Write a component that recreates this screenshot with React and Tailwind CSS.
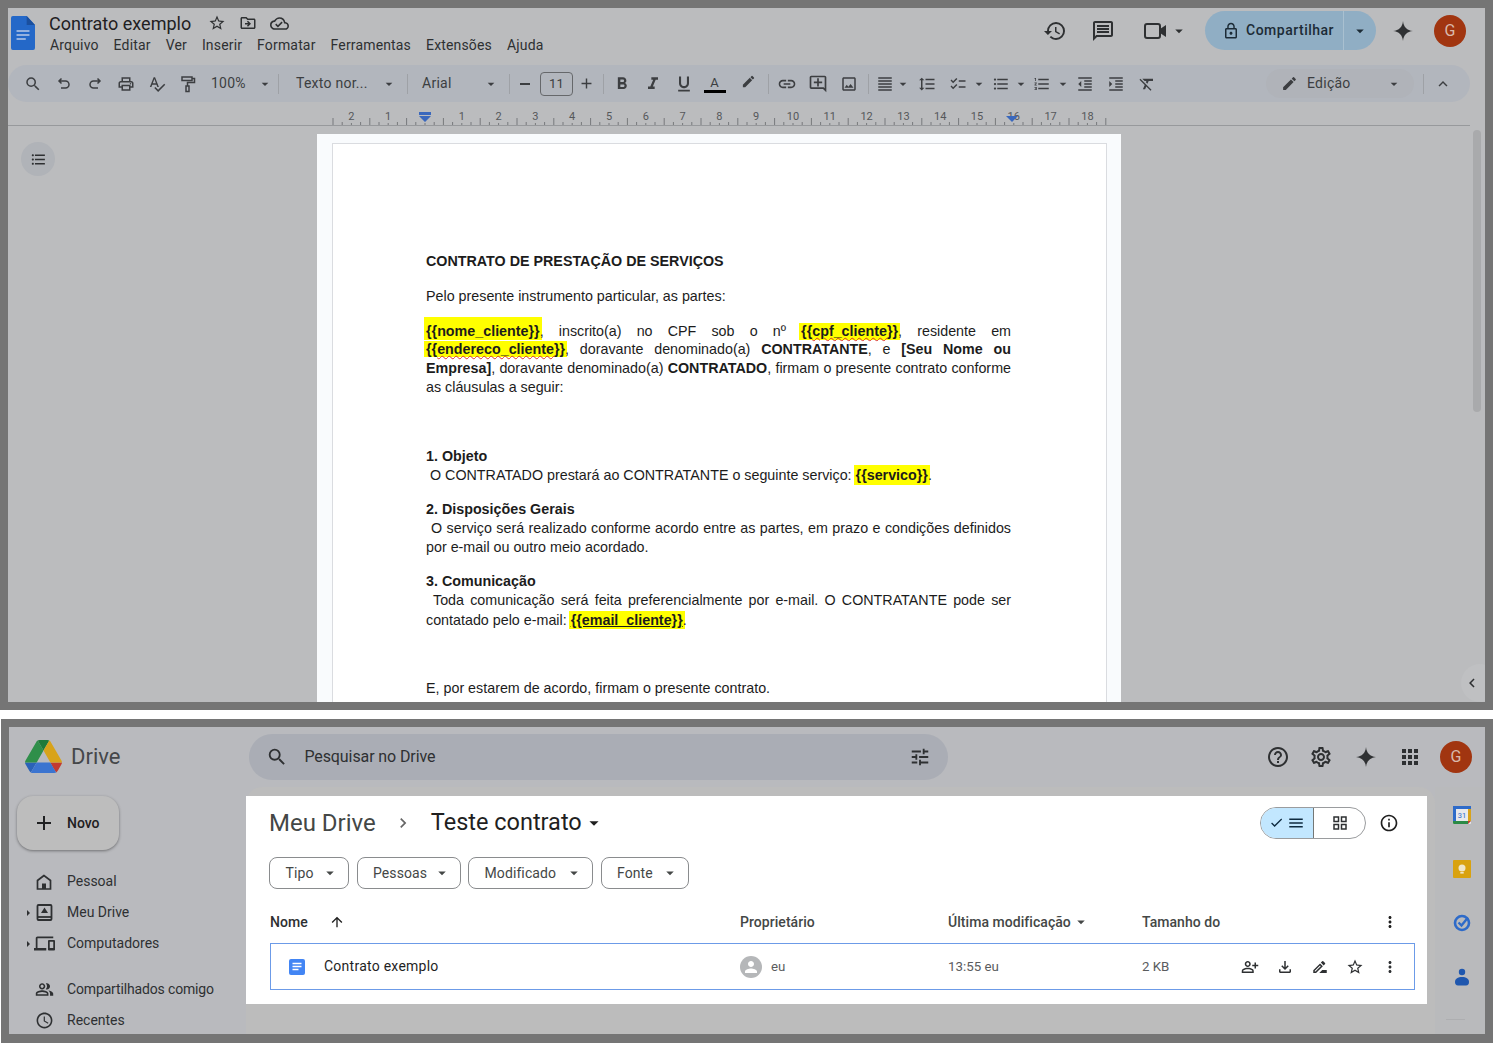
import React from "react";
import {
  MdAccessTime, MdAdd, MdApps, MdArrowDropDown, MdArrowUpward, MdCheck, MdChevronLeft, MdChevronRight,
  MdEdit, MdFormatAlignJustify, MdFormatBold, MdFormatClear, MdFormatIndentDecrease, MdFormatIndentIncrease,
  MdFormatItalic, MdFormatLineSpacing, MdFormatListBulleted, MdFormatListNumbered, MdFormatUnderlined,
  MdHelpOutline, MdHistory, MdInfoOutline, MdKeyboardArrowUp, MdLink, MdLockOutline, MdMenu, MdMoreVert,
  MdOutlineAddComment, MdOutlineChecklist, MdOutlineCloudDone, MdOutlineDevices, MdOutlineDriveFileMove,
  MdOutlineDriveFileRenameOutline, MdOutlineFileDownload, MdOutlineGridView,
  MdOutlineImage, MdOutlineMessage, MdOutlinePeopleAlt, MdOutlinePersonAddAlt, MdOutlinePrint, MdOutlineSettings,
  MdOutlineSpellcheck, MdSearch, MdStarBorder, MdTune, MdPerson,
} from "react-icons/md";

function Spark({ size = 24 }) {
  return (
    <svg width={size} height={size} viewBox="0 0 24 24" fill="#2f3133">
      <path d="M12 2C12.6 8 16 11.4 22 12C16 12.6 12.6 16 12 22C11.4 16 8 12.6 2 12C8 11.4 11.4 8 12 2Z" />
    </svg>
  );
}

function Cell({ children }) {
  return <div className="flex w-[31px] shrink-0 items-center justify-center">{children}</div>;
}

function Sep({ className }) {
  return <div className={"h-[20px] w-px shrink-0 bg-[#9ea1a6] " + className} />;
}

function Undo({ flip }) {
  return (
    <svg width="18" height="18" viewBox="0 0 18 18" fill="none" stroke="#3c3e41" strokeWidth="1.5" className={flip ? "-scale-x-100" : ""}>
      <path d="M6.500 3.500L4 6l2.500 2.500M4 6h6.500a3.500 3.500 0 0 1 0 7H6" />
    </svg>
  );
}

function Roller() {
  return (
    <svg width="18" height="18" viewBox="0 0 18 18" fill="none" stroke="#3c3e41" strokeWidth="1.5">
      <path d="M3 2h10v3.500H3zM13 3.500h2.500v4H8.500V11M7 11h3v5.500H7z" />
    </svg>
  );
}

function Ruler() {
  const ticks = [];
  for (let i = -10; i <= 74; i++) {
    const x = 417 + i * 9.2;
    const h = i % 4 === 0 ? 2 : Math.abs(i % 4) === 2 ? 7 : 3;
    ticks.push(<line key={i} x1={x} x2={x} y1={23 - h} y2={23} stroke="#77797c" strokeWidth="1" />);
  }
  const nums = [-2, -1, 1, 2, 3, 4, 5, 6, 7, 8, 9, 10, 11, 12, 13, 14, 15, 16, 17, 18];
  return (
    <svg width="1462" height="24" className="block">
      <line x1="0" x2="1462" y1="23.5" y2="23.5" stroke="#97999c" />
      {ticks}
      {nums.map((n) => (
        <text key={n} x={417 + n * 36.8} y="18" textAnchor="middle" fontSize="11" fill="#55575a" fontFamily="Roboto, sans-serif">
          {Math.abs(n)}
        </text>
      ))}
      <path d="M411 10h12v3h-12z M411 14h12l-6 6z" fill="#3a68bd" />
      <path d="M998 14h12l-6 6z" fill="#3a68bd" />
    </svg>
  );
}

function Mark({ children, pad }) {
  return <span className={"mx-[-2px] bg-[#ffff00] px-[2px] font-bold " + pad}>{children}</span>;
}

function DocsWindow() {
  return (
    <div className="relative h-[710px] w-[1493px] overflow-hidden border-8 border-[#757575] bg-[#bbbcbe] font-['Roboto',sans-serif] text-[#2e3032]">
      <header className="flex h-[57px] items-start">
        <svg width="24" height="34" viewBox="0 0 26 34" preserveAspectRatio="none" className="ml-[3px] mt-[8px] shrink-0">
          <path d="M2 0h15l9 9v23a2 2 0 0 1-2 2H2a2 2 0 0 1-2-2V2a2 2 0 0 1 2-2z" fill="#2468c8" />
          <path d="M17 0l9 9h-9z" fill="#1a4f9e" />
          <path d="M6 15h14M6 19h14M6 23h10" stroke="#b9c9e6" strokeWidth="1.6" />
        </svg>
        <div className="ml-[14px] shrink-0 pt-[3px]">
          <div className="flex h-[24px] items-center">
            <span className="text-[18px] text-[#1f2022]">Contrato exemplo</span>
            <MdStarBorder size={18} className="ml-[17px]" />
            <MdOutlineDriveFileMove size={18} className="ml-[13px]" />
            <MdOutlineCloudDone size={19} className="ml-[13px]" />
          </div>
          <nav className="ml-px mt-px flex gap-[15px] text-[14px] leading-[18px] tracking-[0.16px]">
            <span>Arquivo</span>
            <span>Editar</span>
            <span>Ver</span>
            <span>Inserir</span>
            <span>Formatar</span>
            <span>Ferramentas</span>
            <span>Extensões</span>
            <span>Ajuda</span>
          </nav>
        </div>
        <div className="ml-auto mr-[19px] mt-[3px] flex h-[39px] items-center self-start">
          <MdHistory size={24} />
          <MdOutlineMessage size={24} className="ml-[24px]" />
          <svg width="27" height="27" viewBox="0 0 27 27" fill="none" className="ml-[27px]">
            <rect x="3" y="7" width="15" height="14" rx="2" stroke="#2e3032" strokeWidth="2" />
            <path d="M18 12l6-4v12l-6-4z" fill="#2e3032" />
          </svg>
          <MdArrowDropDown size={18} className="ml-[1px]" />
          <div className="ml-[17px] flex h-[39px] w-[171px] items-center rounded-full bg-[#90aec4] text-[14px] font-medium tracking-[0.5px] text-[#1c2b36]">
            <MdLockOutline size={18} className="ml-[17px]" />
            <span className="ml-[6px]">Compartilhar</span>
            <div className="ml-auto flex h-full w-[33px] items-center justify-center border-l border-[#a9c0d0]">
              <MdArrowDropDown size={18} />
            </div>
          </div>
          <div className="ml-[15px]"><Spark size={24} /></div>
          <div className="ml-[19px] flex h-[32px] w-[32px] items-center justify-center rounded-full bg-[#a13510] text-[16px] text-[#d9b9ac]">G</div>
        </div>
      </header>

      <div className="flex h-[37px] w-[1462px] items-center rounded-full bg-[#b2b6bd] pl-[9px] text-[14px] tracking-[0.25px] text-[#3c3e41]">
        <Cell><MdSearch size={18} /></Cell>
        <Cell><Undo /></Cell>
        <Cell><Undo flip /></Cell>
        <Cell><MdOutlinePrint size={18} /></Cell>
        <Cell><MdOutlineSpellcheck size={18} /></Cell>
        <Cell><Roller /></Cell>
        <span className="ml-[8px] w-[36px] shrink-0">100%</span>
        <MdArrowDropDown size={16} className="ml-[10px] shrink-0" />
        <Sep className="ml-[5px]" />
        <span className="ml-[17px] w-[71px] shrink-0 whitespace-nowrap">Texto nor...</span>
        <MdArrowDropDown size={16} className="ml-[14px] shrink-0" />
        <Sep className="ml-[10px]" />
        <span className="ml-[14px] w-[29px] shrink-0">Arial</span>
        <MdArrowDropDown size={16} className="ml-[32px] shrink-0" />
        <Sep className="ml-[10px]" />
        <span className="ml-[10px] h-[2px] w-[10px] shrink-0 bg-[#3c3e41]" />
        <div className="ml-[10px] flex h-[24px] w-[33px] shrink-0 items-center justify-center rounded-[4px] border border-[#66686b] text-[13px]">11</div>
        <MdAdd size={17} className="ml-[5px] shrink-0" />
        <Sep className="ml-[8px]" />
        <div className="ml-[2px] flex">
          <Cell><MdFormatBold size={20} /></Cell>
          <Cell><MdFormatItalic size={20} /></Cell>
          <Cell><MdFormatUnderlined size={20} /></Cell>
          <Cell>
            <div className="flex flex-col items-center">
              <span className="text-[13px] leading-[15px]">A</span>
              <span className="h-[3px] w-[22px] bg-black" />
            </div>
          </Cell>
          <div className="ml-[3px]"><Cell><MdEdit size={15} /></Cell></div>
        </div>
        <Sep className="ml-[4px]" />
        <div className="ml-[2px] flex">
          <Cell><MdLink size={20} /></Cell>
          <Cell><MdOutlineAddComment size={20} /></Cell>
          <Cell><MdOutlineImage size={18} /></Cell>
        </div>
        <Sep className="ml-[4px]" />
        <MdFormatAlignJustify size={18} className="ml-[7px] shrink-0" />
        <MdArrowDropDown size={16} className="ml-[1px] shrink-0" />
        <MdFormatLineSpacing size={18} className="ml-[7px] shrink-0" />
        <MdOutlineChecklist size={18} className="ml-[13px] shrink-0" />
        <MdArrowDropDown size={16} className="ml-[4px] shrink-0" />
        <MdFormatListBulleted size={18} className="ml-[5px] shrink-0" />
        <MdArrowDropDown size={16} className="ml-[3px] shrink-0" />
        <MdFormatListNumbered size={18} className="ml-[4px] shrink-0" />
        <MdArrowDropDown size={16} className="ml-[4px] shrink-0" />
        <MdFormatIndentDecrease size={18} className="ml-[5px] shrink-0" />
        <MdFormatIndentIncrease size={18} className="ml-[13px] shrink-0" />
        <MdFormatClear size={18} className="ml-[13px] shrink-0" />
        <div className="ml-auto mr-[18px] flex items-center">
          <div className="flex h-[29px] w-[148px] items-center rounded-full bg-[#b0b3b9]">
            <MdEdit size={17} className="ml-[15px]" />
            <span className="ml-[9px]">Edição</span>
            <MdArrowDropDown size={16} className="ml-auto mr-[12px]" />
          </div>
          <Sep className="ml-[9px]" />
          <MdKeyboardArrowUp size={18} className="ml-[10px]" />
        </div>
      </div>

      <Ruler />

      <main className="h-[576px] overflow-hidden pl-[309px] pt-[8px]">
        <div className="h-[568px] w-[804px] bg-[#f9fbfd] pl-[15px] pt-[9px]">
          <article className="h-[560px] w-[775px] border-x border-t border-[#dadce0] bg-white pl-[93px] pt-[108px] font-['Liberation_Sans',Arial,sans-serif] text-[14.3px] leading-[19px] text-[#1c1c1c]">
            <div className="w-[585px]">
              <h1 className="font-bold">CONTRATO DE PRESTAÇÃO DE SERVIÇOS</h1>
              <p className="mt-[16px]">Pelo presente instrumento particular, as partes:</p>
              <div className="mt-[15.500px] leading-[18.7px] [text-align-last:justify]">
                <div>
                  <Mark pad="pt-[6px] pb-[1px]">{"{{nome_cliente}}"}</Mark>, inscrito(a) no CPF sob o nº <Mark pad="pb-[1px]">{"{{"}<span className="underline decoration-[#d9342b] decoration-wavy decoration-1">cpf_cliente</span>{"}}"}</Mark>, residente em
                </div>
                <div>
                  <Mark pad="">{"{{"}<span className="underline decoration-[#d9342b] decoration-wavy decoration-1">endereco_cliente</span>{"}}"}</Mark>, doravante denominado(a) <b>CONTRATANTE</b>, e <b>[Seu Nome ou</b>
                </div>
                <div><b>Empresa]</b>, doravante denominado(a) <b>CONTRATADO</b>, firmam o presente contrato conforme</div>
                <div className="[text-align-last:left]">as cláusulas a seguir:</div>
              </div>
              <h2 className="mt-[51px] font-bold">1. Objeto</h2>
              <p className="pl-[4px]">O CONTRATADO prestará ao CONTRATANTE o seguinte serviço: <Mark pad="py-[2px]">{"{{servico}}"}</Mark>.</p>
              <h2 className="mt-[15px] font-bold">2. Disposições Gerais</h2>
              <p className="pl-[5px] [text-align-last:justify]">O serviço será realizado conforme acordo entre as partes, em prazo e condições definidos</p>
              <p>por e-mail ou outro meio acordado.</p>
              <h2 className="mt-[15px] font-bold">3. Comunicação</h2>
              <p className="pl-[7px] [text-align-last:justify]">Toda comunicação será feita preferencialmente por e-mail. O CONTRATANTE pode ser</p>
              <p className="pt-px">contatado pelo e-mail: <Mark pad="py-[1px]"><span className="underline">{"{{email_cliente}}"}</span></Mark>.</p>
              <p className="mt-[49px]">E, por estarem de acordo, firmam o presente contrato.</p>
            </div>
          </article>
        </div>
      </main>

      <button className="absolute left-[13px] top-[134px] flex h-[34px] w-[34px] items-center justify-center rounded-full bg-[#b0b3b8]">
        <MdFormatListBulleted size={17} />
      </button>
      <div className="absolute left-[1465px] top-[122px] h-[282px] w-[8px] rounded-full bg-[#a9aaac]" />
      <div className="absolute left-[1453px] top-[656px] flex h-[38px] w-[38px] items-center rounded-full bg-[#bfc0c2] pl-[2px]">
        <MdChevronLeft size={18} />
      </div>
    </div>
  );
}

function NavItem({ icon, label, caret, className }) {
  return (
    <div className={"flex h-[31px] items-center " + (className || "")}>
      <span className="flex w-[7px] justify-center">
        {caret && <span className="h-0 w-0 border-y-[3px] border-l-[3px] border-y-transparent border-l-[#2e3032]" />}
      </span>
      <span className="flex w-[24px] justify-center">{icon}</span>
      <span className="ml-[11px] whitespace-nowrap">{label}</span>
    </div>
  );
}

function FilterChip({ label, className }) {
  return (
    <div className={"flex h-[32px] items-center justify-between rounded-lg border border-[#8a8c8e] pl-[15.500px] pr-[9px] text-[14px] tracking-[0.1px] text-[#444746] " + className}>
      <span>{label}</span>
      <MdArrowDropDown size={18} />
    </div>
  );
}

function RailIcon({ children }) {
  return <div className="flex h-[54px] items-center justify-center">{children}</div>;
}

function DriveWindow() {
  return (
    <div className="ml-[1px] h-[324px] w-[1492px] overflow-hidden border-8 border-b-[9px] border-[#757575] bg-[#b9babe] font-['Roboto',sans-serif] text-[#2e3032]">
      <header className="flex h-[60px] items-center pb-[1px]">
        <svg width="37" height="33" viewBox="0 0 87.3 78" className="ml-[16px] shrink-0">
          <path d="m6.6 66.85 3.85 6.65c.8 1.4 1.95 2.5 3.3 3.3l13.75-23.8h-27.5c0 1.55.4 3.1 1.2 4.5z" fill="#2a62b8" />
          <path d="m43.65 25-13.75-23.8c-1.35.8-2.5 1.9-3.3 3.3l-25.4 44a9.06 9.06 0 0 0 -1.2 4.5h27.5z" fill="#2f8f4a" />
          <path d="m73.55 76.8c1.35-.8 2.5-1.9 3.3-3.3l1.6-2.75 7.65-13.25c.8-1.4 1.2-2.95 1.2-4.5h-27.502l5.852 11.5z" fill="#c23b30" />
          <path d="m43.65 25 13.75-23.8c-1.35-.8-2.9-1.2-4.5-1.2h-18.5c-1.6 0-3.15.45-4.5 1.2z" fill="#1f7a3a" />
          <path d="m59.8 53h-32.3l-13.75 23.8c1.35.8 2.9 1.2 4.5 1.2h50.8c1.6 0 3.15-.45 4.5-1.2z" fill="#3b74d0" />
          <path d="m73.4 26.5-12.7-22c-.8-1.4-1.95-2.5-3.3-3.3l-13.75 23.8 16.15 28h27.45c0-1.55-.4-3.1-1.2-4.5z" fill="#d8a31a" />
        </svg>
        <span className="ml-[9px] text-[22px] text-[#45474a]">Drive</span>
        <div className="ml-[129px] flex h-[46px] w-[699px] shrink-0 items-center rounded-full bg-[#aaadb5] text-[16px] tracking-[-0.1px]">
          <MdSearch size={22} className="ml-[17px]" />
          <span className="ml-[16px]">Pesquisar no Drive</span>
          <MdTune size={22} className="ml-auto mr-[17px]" />
        </div>
        <div className="ml-auto mr-[13px] flex items-center">
          <MdHelpOutline size={24} />
          <MdOutlineSettings size={24} className="ml-[19px]" />
          <div className="ml-[21px]"><Spark size={24} /></div>
          <MdApps size={24} className="ml-[20px]" />
          <div className="ml-[18px] flex h-[32px] w-[32px] items-center justify-center rounded-full bg-[#a13510] text-[16px] text-[#d9b9ac]">G</div>
        </div>
      </header>

      <div className="flex h-[247px]">
        <aside className="w-[237px] shrink-0 text-[14px]">
          <button className="ml-[8px] mt-[9px] flex h-[54px] w-[102px] items-center rounded-2xl bg-[#bdbdbd] font-medium text-[#1f2022] shadow-[0_1px_3px_rgba(0,0,0,0.4)]">
            <MdAdd size={24} className="ml-[15px]" />
            <span className="ml-[11px]">Novo</span>
          </button>
          <div className="ml-[16px] mt-[16px]">
            <NavItem
              label="Pessoal"
              icon={
                <svg width="18" height="18" viewBox="0 0 18 18" fill="none" stroke="#2e3032" strokeWidth="1.7">
                  <path d="M9 2.500L2.500 7.500V16h13V7.500z" />
                  <rect x="7" y="10.500" width="4" height="5.500" fill="#2e3032" stroke="none" />
                </svg>
              }
            />
            <NavItem
              caret
              label="Meu Drive"
              icon={
                <svg width="17" height="17" viewBox="0 0 17 17" fill="none" stroke="#2e3032" strokeWidth="1.8">
                  <rect x="1.500" y="1" width="14" height="15" rx="1" />
                  <path d="M1.500 13h14" />
                  <path d="M8.500 3.500l3.500 5.500h-7z" fill="#2e3032" stroke="none" />
                </svg>
              }
            />
            <NavItem caret icon={<MdOutlineDevices size={21} />} label="Computadores" />
            <NavItem className="mt-[15px] tracking-[-0.15px]" icon={<MdOutlinePeopleAlt size={19} />} label="Compartilhados comigo" />
            <NavItem icon={<MdAccessTime size={19} />} label="Recentes" />
          </div>
        </aside>

        <div className="w-[1189px] shrink-0 rounded-t-2xl bg-[#bcbcbc] pt-[9px]">
          <section className="h-[208px] w-[1181px] bg-white pl-[23px] pr-[12px] text-[14px]">
            <div className="flex h-[53px] items-center">
              <span className="text-[24px] text-[#444746]">Meu Drive</span>
              <MdChevronRight size={20} className="ml-[17px] text-[#666]" />
              <span className="ml-[18px] text-[23.500px] text-[#1f1f1f]">Teste contrato</span>
              <MdArrowDropDown size={22} className="ml-[1px] text-[#1f1f1f]" />
              <div className="ml-auto mr-[13px] flex h-[32px] w-[106px] overflow-hidden rounded-full border border-[#9a9c9e]">
                <div className="flex w-[53px] items-center justify-center gap-[3px] border-r border-[#747775] bg-[#c2e7ff] text-[#0f2b40]">
                  <MdCheck size={15} />
                  <MdMenu size={18} />
                </div>
                <div className="flex flex-1 items-center justify-center">
                  <MdOutlineGridView size={18} />
                </div>
              </div>
              <MdInfoOutline size={20} className="mr-[16px] text-[#1f1f1f]" />
            </div>
            <div className="mt-[8px] flex gap-[7.500px]">
              <FilterChip label="Tipo" className="w-[80px]" />
              <FilterChip label="Pessoas" className="w-[104px]" />
              <FilterChip label="Modificado" className="w-[125px]" />
              <FilterChip label="Fonte" className="w-[88px]" />
            </div>
            <div className="mb-[3px] ml-px mt-[15px] grid h-[36px] grid-cols-[470px_208px_194px_1fr] items-center font-medium tracking-[0.05px] text-[#444746]">
              <div className="flex items-center text-[#2e3032]">
                <span>Nome</span>
                <MdArrowUpward size={16} className="ml-[21px] text-[#1f1f1f]" />
              </div>
              <span>Proprietário</span>
              <div className="flex items-center">
                <span>Última modificação</span>
                <MdArrowDropDown size={18} className="ml-px" />
              </div>
              <div className="flex items-center justify-between pr-[16px]">
                <span>Tamanho do</span>
                <MdMoreVert size={18} className="text-[#1f1f1f]" />
              </div>
            </div>
            <div className="ml-px grid h-[47px] grid-cols-[469px_208px_194px_1fr] items-center border-[1.5px] border-[#6c9be8] text-[13.300px] text-[#5a5c5e]">
              <div className="flex items-center">
                <svg width="16" height="16" viewBox="0 0 16 16" className="ml-[18px]">
                  <rect width="16" height="16" rx="2" fill="#4285f4" />
                  <path d="M3.500 4.500h9M3.500 7.500h9M3.500 10.500h6" stroke="#fff" strokeWidth="1.4" />
                </svg>
                <span className="ml-[19px] text-[14px] tracking-[0.25px] text-[#1f1f1f]">Contrato exemplo</span>
              </div>
              <div className="flex items-center">
                <span className="flex h-[22px] w-[22px] items-center justify-center rounded-full bg-[#b5b7b9] text-white">
                  <MdPerson size={18} />
                </span>
                <span className="ml-[9px]">eu</span>
              </div>
              <span>13:55 eu</span>
              <div className="flex items-center text-[#2e3032]">
                <span className="text-[#5a5c5e]">2 KB</span>
                <div className="ml-auto mr-[15px] flex items-center gap-[17px]">
                  <MdOutlinePersonAddAlt size={18} />
                  <MdOutlineFileDownload size={18} />
                  <MdOutlineDriveFileRenameOutline size={18} />
                  <MdStarBorder size={18} />
                  <MdMoreVert size={18} />
                </div>
              </div>
            </div>
          </section>
        </div>

        <aside className="w-[50px] shrink-0 bg-[#b9babc] pl-[11px] pr-[7px] pt-[1px]">
          <RailIcon>
            <svg width="18" height="18" viewBox="0 0 18 18">
              <rect width="18" height="18" rx="1" fill="#e8e9ec" />
              <path d="M0 0h18v3H0zM0 3h3v12H0z" fill="#2e6bc9" />
              <path d="M0 15h15v3H1a1 1 0 0 1-1-1z" fill="#2b8a45" />
              <path d="M15 3h3v12h-3z" fill="#d8a31a" />
              <path d="M15 15h3l-3 3z" fill="#c23b30" />
              <text x="9" y="12" textAnchor="middle" fontSize="7.500" fontFamily="Roboto, sans-serif" fill="#2e6bc9">31</text>
            </svg>
          </RailIcon>
          <RailIcon>
            <svg width="18" height="18" viewBox="0 0 18 18">
              <rect width="18" height="18" rx="1" fill="#d9a20f" />
              <circle cx="9" cy="8" r="3.500" fill="#efe6c8" />
              <rect x="7.300" y="12" width="3.400" height="1.600" fill="#efe6c8" />
            </svg>
          </RailIcon>
          <RailIcon>
            <svg width="18" height="18" viewBox="0 0 18 18" fill="none">
              <circle cx="9" cy="9" r="7" stroke="#2e6bc9" strokeWidth="2.600" />
              <path d="M5.500 8.500l3 3 6.500-8" stroke="#2e6bc9" strokeWidth="2.400" />
            </svg>
          </RailIcon>
          <RailIcon>
            <svg width="14" height="18" viewBox="0 0 14 18" fill="#1f57ae">
              <circle cx="7" cy="4" r="3.200" />
              <path d="M0 14c0-3.500 3-5 7-5s7 1.500 7 5c0 2-1 3.500-3 3.500H3c-2 0-3-1.500-3-3.500z" />
            </svg>
          </RailIcon>
          <div className="mt-[15px] h-px w-[19px] bg-[#adaeb0]" />
        </aside>
      </div>
    </div>
  );
}

export default function App() {
  return (
    <div className="h-[1043px] w-[1495px] overflow-hidden bg-white">
      <DocsWindow />
      <div className="h-[9px]" />
      <DriveWindow />
    </div>
  );
}
